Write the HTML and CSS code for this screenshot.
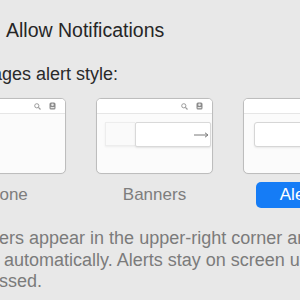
FILE: index.html
```html
<!DOCTYPE html>
<html lang="en">
<head>
  <meta charset="UTF-8" />
  <title>Notifications</title>
  <link rel="stylesheet" href="styles.css">
</head>
<body>
  <div class="pane">
    <div class="allow">Allow Notifications</div>
    <div class="style-label">Messages alert style:</div>

    <div class="options">
      <div class="option">
        <div class="preview">
          <div class="menubar">
            <svg class="icon-search" width="7" height="7" viewBox="0 0 7 7"><circle cx="2.8" cy="2.8" r="2.1" fill="none" stroke="#9b9b9b" stroke-width="1"/><line x1="4.4" y1="4.4" x2="6.5" y2="6.5" stroke="#9b9b9b" stroke-width="1.2"/></svg>
            <svg class="icon-user" width="7" height="8" viewBox="0 0 7 8"><rect x="0.5" y="0.5" width="6" height="7" rx="1.5" fill="#8a8a8a"/><circle cx="3.5" cy="2.8" r="1.3" fill="#e6e6e6"/><rect x="1.5" y="5" width="4" height="1.3" rx="0.6" fill="#e6e6e6"/></svg>
          </div>
        </div>
        <div class="caption">None</div>
      </div>

      <div class="option">
        <div class="preview">
          <div class="menubar">
            <svg class="icon-search" width="7" height="7" viewBox="0 0 7 7"><circle cx="2.8" cy="2.8" r="2.1" fill="none" stroke="#9b9b9b" stroke-width="1"/><line x1="4.4" y1="4.4" x2="6.5" y2="6.5" stroke="#9b9b9b" stroke-width="1.2"/></svg>
            <svg class="icon-user" width="7" height="8" viewBox="0 0 7 8"><rect x="0.5" y="0.5" width="6" height="7" rx="1.5" fill="#8a8a8a"/><circle cx="3.5" cy="2.8" r="1.3" fill="#e6e6e6"/><rect x="1.5" y="5" width="4" height="1.3" rx="0.6" fill="#e6e6e6"/></svg>
          </div>
          <div class="screen banners">
            <div class="ghost"></div>
            <div class="banner">
              <svg width="15" height="6" viewBox="0 0 15 6"><line x1="0" y1="3" x2="13.5" y2="3" stroke="#7a7a7a" stroke-width="1"/><path d="M11 0.8 L14 3 L11 5.2" fill="none" stroke="#7a7a7a" stroke-width="1"/></svg>
            </div>
          </div>
        </div>
        <div class="caption">Banners</div>
      </div>

      <div class="option">
        <div class="preview">
          <div class="menubar">
            <svg class="icon-search" width="7" height="7" viewBox="0 0 7 7"><circle cx="2.8" cy="2.8" r="2.1" fill="none" stroke="#9b9b9b" stroke-width="1"/><line x1="4.4" y1="4.4" x2="6.5" y2="6.5" stroke="#9b9b9b" stroke-width="1.2"/></svg>
            <svg class="icon-user" width="7" height="8" viewBox="0 0 7 8"><rect x="0.5" y="0.5" width="6" height="7" rx="1.5" fill="#8a8a8a"/><circle cx="3.5" cy="2.8" r="1.3" fill="#e6e6e6"/><rect x="1.5" y="5" width="4" height="1.3" rx="0.6" fill="#e6e6e6"/></svg>
          </div>
          <div class="screen alerts">
            <div class="alert-box"></div>
          </div>
        </div>
        <div class="caption selected">Alerts</div>
      </div>
    </div>

    <p class="hint">
      Banners appear in the upper-right corner and go<br>
      away automatically. Alerts stay on screen until<br>
      dismissed.
    </p>
  </div>
</body>
</html>
```

FILE: styles.css
```css
body {
  margin: 0;
  background: #e8e8e8;
  font-family: "Liberation Sans", Arial, sans-serif;
  color: #262626;
  overflow: hidden;
}

.pane {
  margin-left: -51px;
  padding-top: 19px;
  white-space: nowrap;
}

.allow {
  font-size: 19.5px;
  line-height: 22px;
  padding-left: 57px;
}

.style-label {
  font-size: 18px;
  line-height: 22px;
  margin-top: 22px;
  color: #2a2a2a;
}

.options {
  display: flex;
  gap: 30px;
  margin-top: 13px;
}

.option {
  width: 117px;
  flex-shrink: 0;
  display: flex;
  flex-direction: column;
  align-items: center;
  gap: 8px;
}

.preview {
  width: 117px;
  height: 76px;
  box-sizing: border-box;
  border: 1px solid #bdbdbd;
  border-radius: 5px;
  background: #fbfbfb;
  overflow: hidden;
  box-shadow: 0 0 1px rgba(0, 0, 0, 0.08);
}

.menubar {
  height: 14px;
  background: #fff;
  border-bottom: 1px solid #e6e6e6;
  display: flex;
  justify-content: flex-end;
  align-items: center;
  gap: 8px;
  padding-right: 9px;
}

.screen {
  display: flex;
  padding-top: 8px;
}

.banners {
  padding-left: 8px;
}

.ghost {
  width: 30px;
  height: 24px;
  box-sizing: border-box;
  background: #fafafa;
  border: 1px solid #ededed;
  border-right: none;
  box-shadow: 0 1px 2px rgba(0, 0, 0, 0.06);
}

.banner {
  width: 76px;
  height: 25px;
  box-sizing: border-box;
  background: #fff;
  border: 1px solid #d9d9d9;
  border-radius: 2px;
  box-shadow: 0 1px 2px rgba(0, 0, 0, 0.1);
  display: flex;
  align-items: center;
  justify-content: flex-end;
  padding-right: 1px;
}

.alerts {
  justify-content: center;
}

.alert-box {
  width: 96px;
  height: 25px;
  box-sizing: border-box;
  background: #fff;
  border: 1px solid #d6d6d6;
  border-radius: 3px;
  box-shadow: 0 1px 2px rgba(0, 0, 0, 0.08);
}

.caption {
  font-size: 17px;
  line-height: 26px;
  color: #7d7d7d;
  padding: 0 10px;
}

.caption.selected {
  width: 91px;
  box-sizing: border-box;
  text-align: center;
  background: #157cf6;
  color: #fff;
  border-radius: 5px;
}

.hint {
  margin: 20px 0 0 8px;
  font-size: 18px;
  line-height: 21.5px;
  color: #7b7b7b;
}
```
